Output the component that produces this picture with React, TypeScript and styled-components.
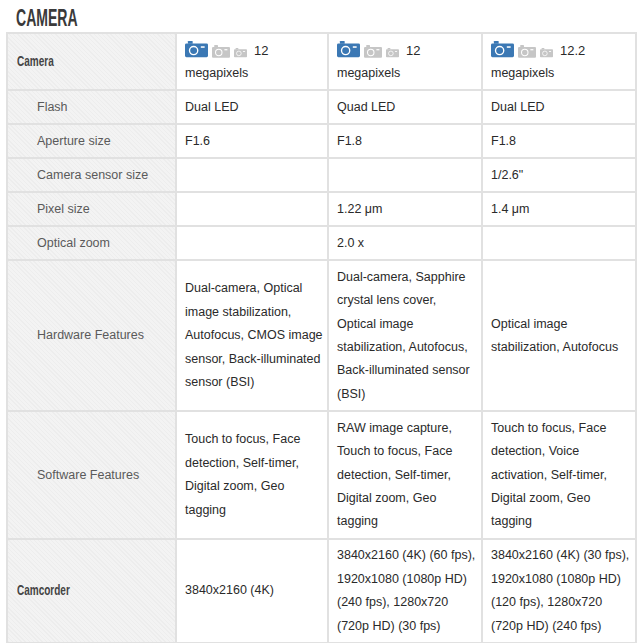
import React from "react";
import styled, { createGlobalStyle } from "styled-components";

const GlobalStyle = createGlobalStyle`
  html, body {
    margin: 0;
    padding: 0;
    background: #ffffff;
  }
  body {
    font-family: "Liberation Sans", Arial, sans-serif;
  }
`;

type Cell = string[] | null;

interface SpecRow {
  label: string;
  heading?: boolean;
  values: Cell[];
}

const rows: SpecRow[] = [
  { label: "Flash", values: [["Dual LED"], ["Quad LED"], ["Dual LED"]] },
  { label: "Aperture size", values: [["F1.6"], ["F1.8"], ["F1.8"]] },
  { label: "Camera sensor size", values: [null, null, ["1/2.6\""]] },
  { label: "Pixel size", values: [null, ["1.22 μm"], ["1.4 μm"]] },
  { label: "Optical zoom", values: [null, ["2.0 x"], null] },
  {
    label: "Hardware Features",
    values: [
      [
        "Dual-camera, Optical",
        "image stabilization,",
        "Autofocus, CMOS image",
        "sensor, Back-illuminated",
        "sensor (BSI)",
      ],
      [
        "Dual-camera, Sapphire",
        "crystal lens cover,",
        "Optical image",
        "stabilization, Autofocus,",
        "Back-illuminated sensor",
        "(BSI)",
      ],
      ["Optical image", "stabilization, Autofocus"],
    ],
  },
  {
    label: "Software Features",
    values: [
      ["Touch to focus, Face", "detection, Self-timer,", "Digital zoom, Geo", "tagging"],
      [
        "RAW image capture,",
        "Touch to focus, Face",
        "detection, Self-timer,",
        "Digital zoom, Geo",
        "tagging",
      ],
      [
        "Touch to focus, Face",
        "detection, Voice",
        "activation, Self-timer,",
        "Digital zoom, Geo",
        "tagging",
      ],
    ],
  },
  {
    label: "Camcorder",
    heading: true,
    values: [
      ["3840x2160 (4K)"],
      [
        "3840x2160 (4K) (60 fps),",
        "1920x1080 (1080p HD)",
        "(240 fps), 1280x720",
        "(720p HD) (30 fps)",
      ],
      [
        "3840x2160 (4K) (30 fps),",
        "1920x1080 (1080p HD)",
        "(120 fps), 1280x720",
        "(720p HD) (240 fps)",
      ],
    ],
  },
];

const megapixels = ["12", "12", "12.2"];

const CameraIcon = ({ color, width }: { color: string; width: number }) => (
  <svg width={width} height={(width * 17) / 24} viewBox="0 0 24 17">
    <rect x="3" y="0" width="5" height="3" rx="0.5" fill={color} />
    <rect x="0" y="2.5" width="24" height="14.5" rx="1.5" fill={color} />
    <circle cx="9" cy="10" r="4.3" fill="none" stroke="#ffffff" strokeWidth="1.4" />
    <rect x="16.5" y="5.5" width="4" height="1.6" fill="#ffffff" />
  </svg>
);

const Title = styled.h2`
  margin: 0;
  height: 32px;
  padding-left: 16px;
  font-family: "Liberation Sans", Arial, sans-serif;
  font-weight: 700;
  font-size: 23px;
  line-height: 36px;
  color: #3a3a3a;
`;

const Condensed = styled.span<{ $scale: number }>`
  display: inline-block;
  transform: scaleX(${(p) => p.$scale});
  transform-origin: left center;
`;

const Table = styled.table`
  margin-left: 6px;
  width: 629px;
  border-collapse: collapse;
  table-layout: fixed;
  font-size: 12.5px;
  line-height: 23.4px;
  color: #2a2a2a;
`;

const Label = styled.th<{ $heading?: boolean }>`
  border: 2px solid #e1e1e1;
  padding: 4.3px 6px 4.3px ${(p) => (p.$heading ? "9px" : "29px")};
  text-align: left;
  vertical-align: middle;
  white-space: nowrap;
  background-color: #f3f3f3;
  background-image: repeating-linear-gradient(
    45deg,
    rgba(0, 0, 0, 0.025) 0px,
    rgba(0, 0, 0, 0.025) 1px,
    transparent 1px,
    transparent 3px
  );
  font-size: ${(p) => (p.$heading ? "14.5px" : "12.5px")};
  font-weight: ${(p) => (p.$heading ? 700 : 400)};
  color: ${(p) => (p.$heading ? "#444444" : "#5a5a5a")};
`;

const Value = styled.td`
  border: 2px solid #e1e1e1;
  padding: 4.3px 4px 4.3px 8px;
  vertical-align: middle;
  white-space: nowrap;
  background: #ffffff;
`;

const IconLine = styled.div`
  display: flex;
  align-items: flex-end;
  gap: 4px;
  height: 23.4px;
  padding-bottom: 4px;
  box-sizing: border-box;
`;

const Megapixel = styled.span`
  margin-left: 3px;
  line-height: 14px;
  font-size: 13px;
`;

const Lines = ({ lines }: { lines: Cell }) =>
  lines ? (
    <>
      {lines.map((l, i) => (
        <div key={i}>{l}</div>
      ))}
    </>
  ) : null;

export default function App() {
  return (
    <>
      <GlobalStyle />
      <Title>
        <Condensed $scale={0.61}>CAMERA</Condensed>
      </Title>
      <Table>
        <colgroup>
          <col style={{ width: 169 }} />
          <col style={{ width: 152 }} />
          <col style={{ width: 154 }} />
          <col style={{ width: 154 }} />
        </colgroup>
        <tbody>
          <tr>
            <Label $heading>
              <Condensed $scale={0.69}>Camera</Condensed>
            </Label>
            {megapixels.map((mp, i) => (
              <Value key={i}>
                <IconLine>
                  <CameraIcon color="#3b78b4" width={23} />
                  <CameraIcon color="#c6c6c6" width={18} />
                  <CameraIcon color="#c6c6c6" width={13} />
                  <Megapixel>{mp}</Megapixel>
                </IconLine>
                <div>megapixels</div>
              </Value>
            ))}
          </tr>
          {rows.map((row) => (
            <tr key={row.label}>
              <Label $heading={row.heading}>
                {row.heading ? <Condensed $scale={0.69}>{row.label}</Condensed> : row.label}
              </Label>
              {row.values.map((v, i) => (
                <Value key={i}>
                  <Lines lines={v} />
                </Value>
              ))}
            </tr>
          ))}
        </tbody>
      </Table>
    </>
  );
}
